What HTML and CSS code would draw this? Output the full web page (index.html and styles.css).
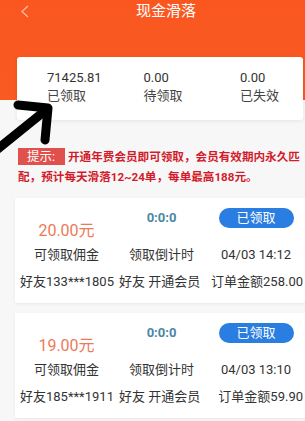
FILE: index.html
```html
<!DOCTYPE html>
<html lang="zh-CN">
<head>
<meta charset="utf-8">
<title>现金滑落</title>
<link rel="stylesheet" href="styles.css">
</head>
<body>
<div class="page">
  <div class="top">
    <div class="titlebar">
      <svg class="back" width="10" height="13" viewBox="0 0 10 13"><polyline points="8,1 2,6.5 8,12" fill="none" stroke="rgba(255,255,255,0.6)" stroke-width="1.3"/></svg>
      <h1 class="title">现金滑落</h1>
    </div>
    <div class="stats">
      <div class="stat"><div class="num">71425.81</div><div class="lbl">已领取</div></div>
      <div class="stat"><div class="num">0.00</div><div class="lbl">待领取</div></div>
      <div class="stat"><div class="num">0.00</div><div class="lbl">已失效</div></div>
    </div>
  </div>

  <div class="tip"><span class="badge">提示:</span><span class="tiptext">开通年费会员即可领取，会员有效期内永久匹配，预计每天滑落12~24单，每单最高188元。</span></div>

  <div class="list">
    <div class="order">
      <div class="grid">
        <div class="price">20.00元</div>
        <div class="timer">0:0:0</div>
        <div class="btn">已领取</div>
        <div class="lbl2">可领取佣金</div>
        <div class="lbl2">领取倒计时</div>
        <div class="lbl2">04/03 14:12</div>
      </div>
      <div class="foot">
        <span>好友133***1805</span>
        <span>好友 开通会员</span>
        <span class="amt">订单金额258.00</span>
      </div>
    </div>
    <div class="order">
      <div class="grid">
        <div class="price">19.00元</div>
        <div class="timer">0:0:0</div>
        <div class="btn">已领取</div>
        <div class="lbl2">可领取佣金</div>
        <div class="lbl2">领取倒计时</div>
        <div class="lbl2">04/03 13:10</div>
      </div>
      <div class="foot">
        <span>好友185***1911</span>
        <span>好友 开通会员</span>
        <span class="amt">订单金额59.90</span>
      </div>
    </div>
  </div>

  <svg class="arrow" width="305" height="421" viewBox="0 0 305 421">
    <g fill="none" stroke="#000" stroke-width="9" stroke-linecap="round" stroke-linejoin="round">
      <line x1="-6" y1="152" x2="46" y2="110"/>
      <polyline points="18,105 48,108 45,140"/>
    </g>
  </svg>
</div>
</body>
</html>
```

FILE: styles.css
```css
html, body {
  margin: 0;
  padding: 0;
}
body {
  background: #f7f7f7;
  font-family: Roboto, "Noto Sans CJK SC", sans-serif;
  color: #333;
  width: 305px;
  height: 421px;
  overflow: hidden;
}
.page {
  position: relative;
  width: 305px;
  height: 421px;
}
.top {
  background: linear-gradient(to bottom, #f9571f 0, #f95a22 100px, transparent 100px);
  padding-left: 17px;
}
.titlebar {
  height: 57px;
  display: flex;
  align-items: flex-start;
}
.back {
  margin-left: 3px;
  margin-top: 5px;
  flex: none;
}
.title {
  flex: 1;
  margin: 0;
  padding-right: 3px;
  text-align: center;
  font-size: 15px;
  font-weight: normal;
  line-height: 22px;
  color: #fff;
}
.stats {
  margin-right: 2px;
  background: #fff;
  border-radius: 3px;
  box-shadow: 0 1px 4px rgba(0, 0, 0, 0.08);
  display: grid;
  grid-template-columns: 96.5px 96.5px 1fr;
  padding: 12px 0 15px 30px;
}
.num {
  font-size: 13px;
  line-height: 18px;
  color: #333;
}
.lbl {
  font-size: 13px;
  line-height: 18px;
  color: #444;
}
.tip {
  margin: 27px 2px 0 18px;
  font-size: 11.6px;
  line-height: 20px;
  font-weight: bold;
  color: #d21c2c;
}
.badge {
  display: inline-block;
  box-sizing: border-box;
  width: 47px;
  height: 17px;
  line-height: 17px;
  margin-right: 3px;
  padding-left: 9px;
  background: #e0514d;
  color: #fff;
  font-size: 12.5px;
  font-weight: normal;
  vertical-align: top;
  margin-top: 1px;
}
.list {
  margin-top: 11px;
  padding-left: 15px;
  display: flex;
  flex-direction: column;
  gap: 10px;
}
.order {
  background: #fff;
  box-shadow: 0 1px 3px rgba(0, 0, 0, 0.07);
  padding: 10px 2px 11px 4px;
}
.grid {
  display: grid;
  grid-template-columns: 95px 95px 1fr;
  align-items: start;
  justify-items: center;
}
.price {
  margin-top: 15px;
  font-size: 16px;
  line-height: 16px;
  color: #ec7a5a;
}
.timer {
  font-size: 13px;
  font-weight: bold;
  line-height: 20px;
  color: #4b87a5;
}
.btn {
  width: 75px;
  height: 20px;
  line-height: 20px;
  border-radius: 10px;
  background: #2a7de1;
  color: #fff;
  font-size: 13px;
  text-align: center;
}
.lbl2 {
  margin-top: 6px;
  font-size: 13px;
  line-height: 20px;
  color: #333;
}
.foot {
  display: flex;
  gap: 5px;
  margin-top: 7px;
  padding-left: 1px;
  font-size: 13px;
  line-height: 20px;
  color: #333;
  white-space: nowrap;
}
.amt {
  margin-left: auto;
}
.arrow {
  position: absolute;
  left: 0;
  top: 0;
  pointer-events: none;
}
```
